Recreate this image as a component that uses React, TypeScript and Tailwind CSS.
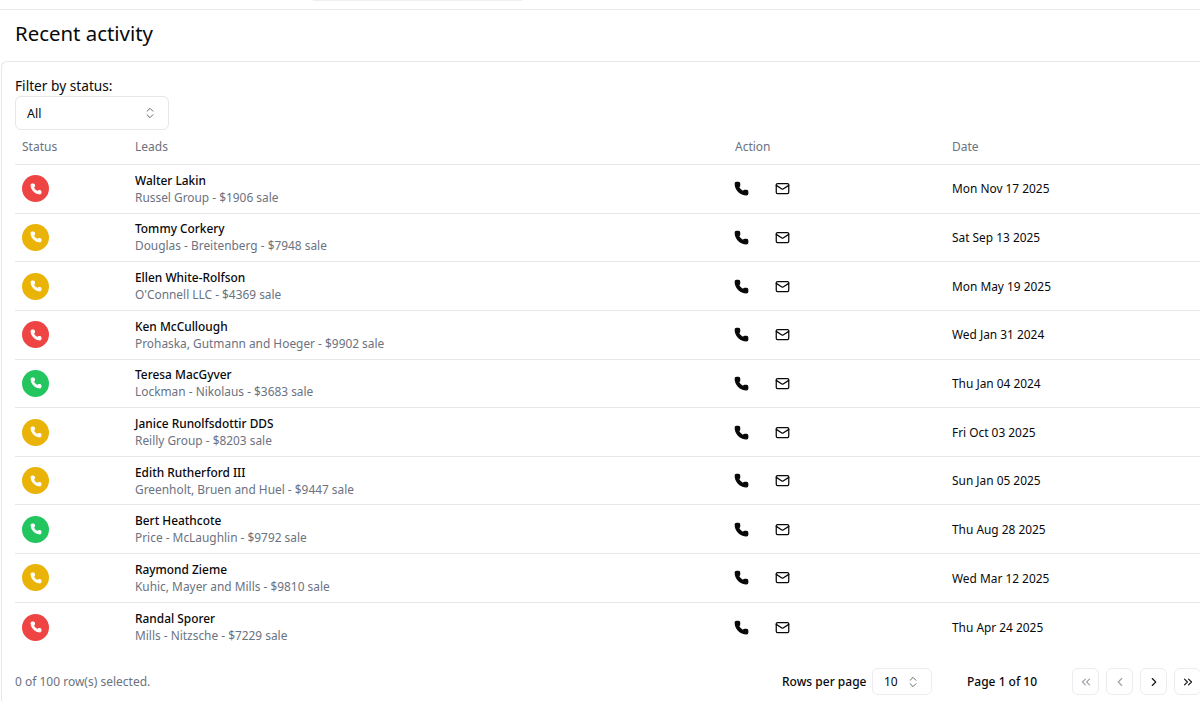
import { ChevronLeft, ChevronRight, ChevronsLeft, ChevronsRight, ChevronsUpDown, Mail, Phone } from 'lucide-react';

type Status = 'red' | 'yellow' | 'green';

interface Lead {
  status: Status;
  name: string;
  detail: string;
  date: string;
}

const leads: Lead[] = [
  { status: 'red', name: 'Walter Lakin', detail: 'Russel Group - $1906 sale', date: 'Mon Nov 17 2025' },
  { status: 'yellow', name: 'Tommy Corkery', detail: 'Douglas - Breitenberg - $7948 sale', date: 'Sat Sep 13 2025' },
  { status: 'yellow', name: 'Ellen White-Rolfson', detail: "O'Connell LLC - $4369 sale", date: 'Mon May 19 2025' },
  { status: 'red', name: 'Ken McCullough', detail: 'Prohaska, Gutmann and Hoeger - $9902 sale', date: 'Wed Jan 31 2024' },
  { status: 'green', name: 'Teresa MacGyver', detail: 'Lockman - Nikolaus - $3683 sale', date: 'Thu Jan 04 2024' },
  { status: 'yellow', name: 'Janice Runolfsdottir DDS', detail: 'Reilly Group - $8203 sale', date: 'Fri Oct 03 2025' },
  { status: 'yellow', name: 'Edith Rutherford III', detail: 'Greenholt, Bruen and Huel - $9447 sale', date: 'Sun Jan 05 2025' },
  { status: 'green', name: 'Bert Heathcote', detail: 'Price - McLaughlin - $9792 sale', date: 'Thu Aug 28 2025' },
  { status: 'yellow', name: 'Raymond Zieme', detail: 'Kuhic, Mayer and Mills - $9810 sale', date: 'Wed Mar 12 2025' },
  { status: 'red', name: 'Randal Sporer', detail: 'Mills - Nitzsche - $7229 sale', date: 'Thu Apr 24 2025' },
];

const statusColors: Record<Status, string> = {
  red: 'bg-[#ef4444]',
  yellow: 'bg-[#eab308]',
  green: 'bg-[#22c55e]',
};

const PagerButton = ({ children, disabled }: { children: React.ReactNode; disabled?: boolean }) => (
  <button
    className={`flex h-[27px] w-[27px] shrink-0 items-center justify-center rounded-md border border-[#ececef] ${
      disabled ? 'text-[#a1a1aa]' : 'text-[#18181b]'
    }`}
  >
    {children}
  </button>
);

export default function App() {
  return (
    <div className="h-[701px] w-[1200px] overflow-hidden bg-white font-['Noto_Sans',sans-serif] text-[#09090b]">
      {/* Top bar */}
      <div className="flex h-[10px] border-b border-[#e9e9ec] pl-[313px]">
        <div className="h-px w-[209px] bg-[#efeff1]" />
      </div>

      <h1 className="flex h-[51px] items-center pl-[15px] pb-[5px] text-[20.4px] leading-none">Recent activity</h1>

      {/* Card */}
      <div className="ml-px h-[640px] rounded-tl-md border-l border-t border-[#e7e7ea] pl-[13px] pt-[14px]">
        <label className="block h-[20px] text-[13.7px] leading-5">Filter by status:</label>
        <div className="flex h-[34px] w-[154px] items-center justify-between rounded-md border border-[#e7e7ea] px-[11px] text-[12.5px]">
          <span className="pt-[2px]">All</span>
          <ChevronsUpDown size={14} strokeWidth={1.5} className="text-[#52525b]" />
        </div>

        {/* Table header */}
        <div className="flex h-[35px] items-center border-b border-[#e7e7ea] pb-px text-[12px] font-normal text-[#6b7280]">
          <div className="w-[120px] pl-[7px]">Status</div>
          <div className="w-[600px]">Leads</div>
          <div className="w-[217px]">Action</div>
          <div>Date</div>
        </div>

        {/* Rows */}
        <div>
          {leads.map((lead) => (
            <div key={lead.name} className="flex h-[48.65px] items-center border-b border-[#e7e7ea] last:border-b-0">
              <div className="w-[120px] pl-[7px]">
                <div className={`flex h-[27px] w-[27px] items-center justify-center rounded-full ${statusColors[lead.status]}`}>
                  <Phone size={12} className="fill-white text-white" />
                </div>
              </div>
              <div className="w-[600px]">
                <div className="text-[11.9px] leading-[17px] font-medium">{lead.name}</div>
                <div className="text-[11.9px] leading-[17px] text-[#6b7280]">{lead.detail}</div>
              </div>
              <div className="-ml-px flex w-[218px] items-center gap-[26px]">
                <Phone size={15} className="fill-[#09090b] text-[#09090b]" />
                <Mail size={15} className="text-[#09090b]" />
              </div>
              <div className="pt-px text-[11.9px]">{lead.date}</div>
            </div>
          ))}
        </div>

        {/* Footer */}
        <div className="mt-[17px] flex h-[27px] items-center text-[12px]">
          <div className="w-[767px] shrink-0 text-[#6b7280]">0 of 100 row(s) selected.</div>
          <div className="w-[90px] shrink-0 font-medium">Rows per page</div>
          <div className="flex h-[27px] w-[60px] shrink-0 items-center justify-between rounded-md border border-[#ececef] px-[11px]">
            <span>10</span>
            <ChevronsUpDown size={14} strokeWidth={1.5} className="text-[#52525b]" />
          </div>
          <div className="ml-[35px] w-[105px] shrink-0 font-medium">Page 1 of 10</div>
          <div className="flex shrink-0 gap-[7px]">
            <PagerButton disabled>
              <ChevronsLeft size={14} />
            </PagerButton>
            <PagerButton disabled>
              <ChevronLeft size={14} />
            </PagerButton>
            <PagerButton>
              <ChevronRight size={14} />
            </PagerButton>
            <PagerButton>
              <ChevronsRight size={14} />
            </PagerButton>
          </div>
        </div>
      </div>
    </div>
  );
}
